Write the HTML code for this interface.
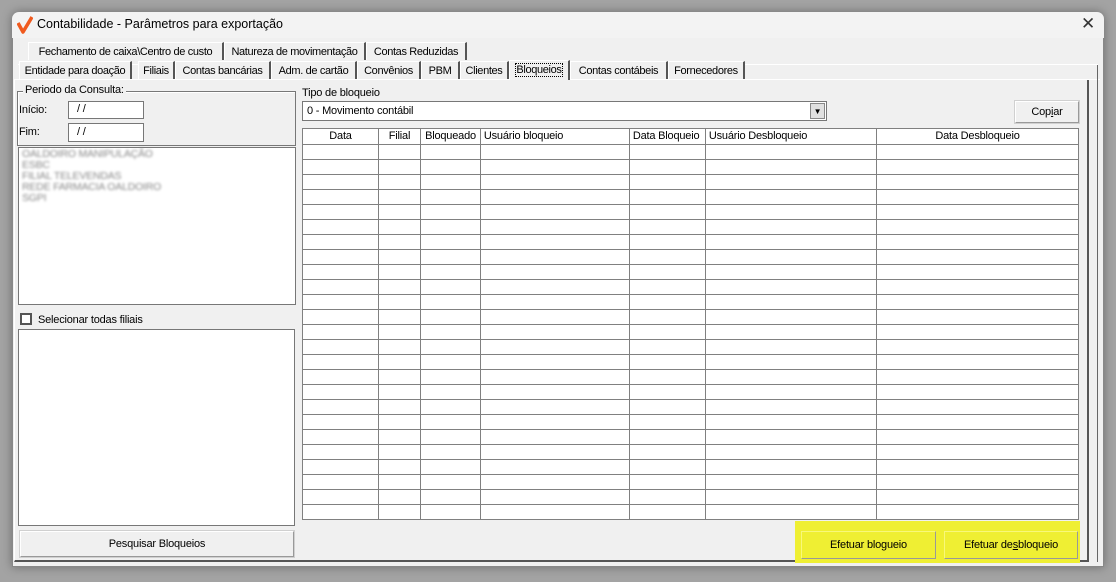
<!DOCTYPE html>
<html><head><meta charset="utf-8"><style>
*{margin:0;padding:0;box-sizing:border-box}
body{width:1116px;height:582px;background:#a3a3a3;position:relative;overflow:hidden;font-family:"Liberation Sans",sans-serif;font-size:11px;letter-spacing:-0.2px;color:#000}
.a{position:absolute;white-space:nowrap}
.win{left:12px;top:12px;width:1092px;height:555px;background:#f0f0f0;border:1px solid #888;border-radius:7px 7px 0 0;box-shadow:0 0 10px rgba(0,0,0,.35)}
.title{left:12px;top:12px;width:1092px;height:26px;background:#f3f3f3;border-radius:7px 7px 0 0}
.tab{position:absolute;height:18px;border-top:1px solid #fff;border-left:1px solid #fff;border-right:2px solid #555;padding:3px 0 0 0;text-align:center;white-space:nowrap;overflow:hidden;background:#f0f0f0;letter-spacing:-0.35px}
.inp{background:#fff;border:1px solid #777}
.btn{background:#f0f0f0;border-top:1px solid #fff;border-left:1px solid #fff;border-right:1px solid #999;border-bottom:1px solid #999;text-align:center;outline:1px solid #d0d0d0}
table{border-collapse:collapse;position:absolute;left:302px;top:128px;width:777px;background:#fff;table-layout:fixed}
td{border:1px solid #808080;height:15px;padding:0;font-size:11px;line-height:13px;white-space:nowrap;overflow:hidden}
</style></head><body>
<div class="a win"></div>
<div class="a title"></div>
<svg class="a" style="left:17px;top:16px" width="16" height="18" viewBox="0 0 16 18"><path d="M1 7 L6 16 L15 1" stroke="#f05a1e" stroke-width="3.5" fill="none" stroke-linejoin="round"/></svg>
<div class="a" style="left:37px;top:17px;font-size:12.5px;letter-spacing:0">Contabilidade - Parâmetros para exportação</div>
<div class="a" style="left:1081px;top:14px;font-size:17px;color:#333;letter-spacing:0">✕</div>

<div class="tab" style="left:28px;top:42px;width:196px">Fechamento de caixa\Centro de custo</div>
<div class="tab" style="left:224px;top:42px;width:142px">Natureza de movimentação</div>
<div class="tab" style="left:366px;top:42px;width:101px">Contas Reduzidas</div>

<div class="a" style="left:14px;top:79px;width:1086px;height:2px;border-top:1px solid #fff"></div>
<div class="a" style="left:14px;top:80px;width:1075px;height:482px;border-left:1px solid #fff;border-right:2px solid #555;border-bottom:2px solid #555"></div>
<div class="a" style="left:1097px;top:64px;width:1px;height:498px;background:#666"></div>
<div class="a" style="left:18px;top:64px;width:1080px;height:1px;background:#fff"></div>

<div class="tab" style="left:19px;top:61px;width:113px">Entidade para doação</div>
<div class="tab" style="left:138px;top:61px;width:37px">Filiais</div>
<div class="tab" style="left:175px;top:61px;width:96px">Contas bancárias</div>
<div class="tab" style="left:271px;top:61px;width:86px">Adm. de cartão</div>
<div class="tab" style="left:357px;top:61px;width:64px">Convênios</div>
<div class="tab" style="left:421px;top:61px;width:39px">PBM</div>
<div class="tab" style="left:460px;top:61px;width:49px">Clientes</div>
<div class="tab" style="left:509px;top:60px;width:61px;height:20px;border-bottom:none"><span style="outline:1px dotted #000">Bloqueios</span></div>
<div class="tab" style="left:570px;top:61px;width:98px">Contas contábeis</div>
<div class="tab" style="left:668px;top:61px;width:77px">Fornecedores</div>

<div class="a" style="left:17px;top:91px;width:279px;height:55px;border:1px solid #777;box-shadow:1px 1px 0 #fff inset"></div>
<div class="a" style="left:23px;top:84px;background:#f0f0f0;padding:0 2px">Periodo da Consulta:</div>
<div class="a" style="left:19px;top:104px">Início:</div>
<div class="a inp" style="left:68px;top:101px;width:76px;height:18px;padding:1px 0 0 8px">/ /</div>
<div class="a" style="left:19px;top:126px">Fim:</div>
<div class="a inp" style="left:68px;top:123px;width:76px;height:19px;padding:2px 0 0 8px">/ /</div>

<div class="a inp" style="left:18px;top:147px;width:278px;height:158px"></div>
<div class="a" style="left:22px;top:149px;color:#888;filter:blur(1.2px);line-height:11px;font-size:10.5px">OALDOIRO MANIPULAÇÃO<br>ESBC<br>FILIAL TELEVENDAS<br>REDE FARMACIA OALDOIRO<br>SGPI</div>

<div class="a" style="left:20px;top:313px;width:12px;height:12px;border:2px solid #555;background:#fff"></div>
<div class="a" style="left:38px;top:314px">Selecionar todas filiais</div>
<div class="a inp" style="left:18px;top:329px;width:277px;height:197px"></div>
<div class="a btn" style="left:20px;top:531px;width:274px;height:26px;line-height:24px">Pesquisar Bloqueios</div>

<div class="a" style="left:302px;top:87px">Tipo de bloqueio</div>
<div class="a inp" style="left:302px;top:101px;width:525px;height:20px;padding:3px 0 0 4px">0 - Movimento contábil</div>
<div class="a" style="left:810px;top:103px;width:15px;height:16px;background:#e0e0e0;border:1px solid #888;font-size:8px;text-align:center;line-height:15px">▼</div>
<div class="a btn" style="left:1015px;top:101px;width:64px;height:22px;line-height:20px">Cop<u>i</u>ar</div>

<table>
<colgroup><col style="width:76px"><col style="width:42px"><col style="width:60px"><col style="width:149px"><col style="width:76px"><col style="width:171px"><col></colgroup>
<tr><td style="text-align:center;height:16px">Data</td><td style="text-align:center">Filial</td><td style="text-align:center">Bloqueado</td><td>&nbsp;Usuário bloqueio</td><td>&nbsp;Data Bloqueio</td><td>&nbsp;Usuário Desbloqueio</td><td style="text-align:center">Data Desbloqueio</td></tr>
<tr><td></td><td></td><td></td><td></td><td></td><td></td><td></td></tr><tr><td></td><td></td><td></td><td></td><td></td><td></td><td></td></tr><tr><td></td><td></td><td></td><td></td><td></td><td></td><td></td></tr><tr><td></td><td></td><td></td><td></td><td></td><td></td><td></td></tr><tr><td></td><td></td><td></td><td></td><td></td><td></td><td></td></tr><tr><td></td><td></td><td></td><td></td><td></td><td></td><td></td></tr><tr><td></td><td></td><td></td><td></td><td></td><td></td><td></td></tr><tr><td></td><td></td><td></td><td></td><td></td><td></td><td></td></tr><tr><td></td><td></td><td></td><td></td><td></td><td></td><td></td></tr><tr><td></td><td></td><td></td><td></td><td></td><td></td><td></td></tr><tr><td></td><td></td><td></td><td></td><td></td><td></td><td></td></tr><tr><td></td><td></td><td></td><td></td><td></td><td></td><td></td></tr><tr><td></td><td></td><td></td><td></td><td></td><td></td><td></td></tr><tr><td></td><td></td><td></td><td></td><td></td><td></td><td></td></tr><tr><td></td><td></td><td></td><td></td><td></td><td></td><td></td></tr><tr><td></td><td></td><td></td><td></td><td></td><td></td><td></td></tr><tr><td></td><td></td><td></td><td></td><td></td><td></td><td></td></tr><tr><td></td><td></td><td></td><td></td><td></td><td></td><td></td></tr><tr><td></td><td></td><td></td><td></td><td></td><td></td><td></td></tr><tr><td></td><td></td><td></td><td></td><td></td><td></td><td></td></tr><tr><td></td><td></td><td></td><td></td><td></td><td></td><td></td></tr><tr><td></td><td></td><td></td><td></td><td></td><td></td><td></td></tr><tr><td></td><td></td><td></td><td></td><td></td><td></td><td></td></tr><tr><td></td><td></td><td></td><td></td><td></td><td></td><td></td></tr><tr><td style="height:12px"></td><td></td><td></td><td></td><td></td><td></td><td></td></tr>
</table>

<div class="a" style="left:795px;top:521px;width:285px;height:42px;background:#efef33"></div>
<div class="a btn" style="left:801px;top:531px;width:135px;height:28px;line-height:26px;background:#efef33;outline:none;border-color:#f8f87a #999 #999 #f8f87a">Efetuar blogueio</div>
<div class="a btn" style="left:944px;top:531px;width:134px;height:28px;line-height:26px;background:#efef33;outline:none;border-color:#f8f87a #999 #999 #f8f87a">Efetuar de<u>s</u>bloqueio</div>
</body></html>
